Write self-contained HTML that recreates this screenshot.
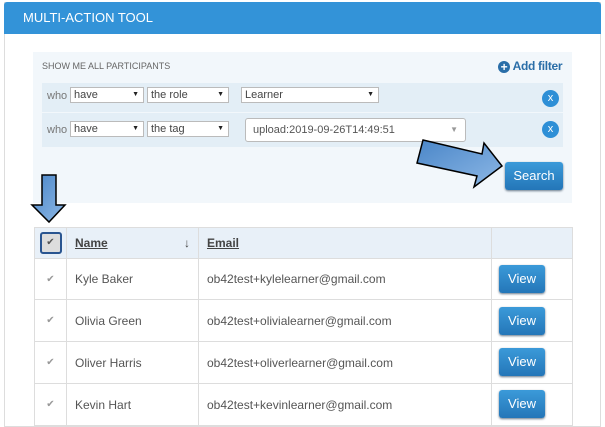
<!DOCTYPE html><html><head><style>
body{margin:0;width:605px;height:427px;background:#fff;font-family:"Liberation Sans",sans-serif;position:relative;overflow:hidden}
.a{position:absolute}
.sel{position:absolute;background:#fff;border:1px solid #bbb;font-size:11px;color:#444;box-sizing:border-box;padding:1px 3px;line-height:12px}
.sel:after{content:"▼";position:absolute;right:4px;top:1px;font-size:7px;color:#222}
.x{position:absolute;width:17px;height:17px;border-radius:50%;background:#2e8fd6;color:#fff;font-size:11px;text-align:center;line-height:16px}
.btn{position:absolute;background:linear-gradient(#3b9ad9,#2476b8);color:#fff;border-radius:3px;font-size:13px;text-align:center;box-shadow:0 1px 2px #678}
table{table-layout:fixed}
td{border:1px solid #ddd;font-size:12px;color:#555;padding:0;overflow:hidden;white-space:nowrap}
</style></head><body>
<div class="a" style="left:4px;top:2px;width:597px;height:425px;border:1px solid #ddd;box-sizing:border-box"></div>
<div class="a" style="left:4px;top:2px;width:597px;height:32px;background:#3393d8;border-radius:3px 3px 0 0;color:#fff;font-size:13px;line-height:32px;padding-left:19px;box-sizing:border-box">MULTI-ACTION TOOL</div>
<div class="a" style="left:33px;top:52px;width:539px;height:151px;background:#f2f7fb"></div>
<div class="a" style="left:42px;top:61px;font-size:9px;color:#666">SHOW ME ALL PARTICIPANTS</div>
<div class="a" style="left:498px;top:59px;font-size:12px;font-weight:bold;color:#2a6ea8;letter-spacing:-0.3px"><span style="display:inline-block;width:12px;height:12px;border-radius:50%;background:#2a6ea8;color:#fff;text-align:center;line-height:12px;font-size:12px;vertical-align:-1px">+</span> Add filter</div>
<div class="a" style="left:42px;top:83px;width:521px;height:29px;background:#e3eef6"></div>
<div class="a" style="left:42px;top:113px;width:521px;height:34px;background:#e3eef6"></div>
<div class="a" style="left:47px;top:90px;font-size:11px;color:#777">who</div>
<div class="a" style="left:47px;top:124px;font-size:11px;color:#777">who</div>
<div class="sel" style="left:70px;top:87px;width:74px;height:16px">have</div>
<div class="sel" style="left:147px;top:87px;width:82px;height:16px">the role</div>
<div class="sel" style="left:241px;top:87px;width:138px;height:16px">Learner</div>
<div class="sel" style="left:70px;top:121px;width:74px;height:16px">have</div>
<div class="sel" style="left:147px;top:121px;width:82px;height:16px">the tag</div>
<div class="a" style="left:245px;top:118px;width:221px;height:24px;background:#fff;border:1px solid #bbb;border-radius:3px;box-sizing:border-box;font-size:11px;color:#555;line-height:22px;padding-left:7px">upload:2019-09-26T14:49:51<span style="position:absolute;right:7px;color:#999;font-size:8px">▼</span></div>
<div class="x" style="left:542px;top:90px">x</div>
<div class="x" style="left:542px;top:121px">x</div>
<div class="btn" style="left:505px;top:162px;width:58px;height:28px;line-height:28px">Search</div>
<svg class="a" style="left:0;top:0" width="605" height="427"><defs><linearGradient id="g" x1="0" y1="0" x2="1" y2="1"><stop offset="0" stop-color="#4a86c8"/><stop offset="1" stop-color="#8db8e6"/></linearGradient></defs>
<polygon points="423,140 482,154 484,143 502,166 474,187 477,176 417,163" fill="url(#g)" stroke="#000" stroke-width="1.5"/>
<polygon points="42,175 56,175 56,205 65,205 49,222 32,205 42,205" fill="url(#g)" stroke="#000" stroke-width="1.5"/></svg>
<table class="a" style="left:34px;top:227px;width:538px;border-collapse:collapse">
<colgroup><col style="width:32px"><col style="width:132px"><col style="width:293px"><col style="width:81px"></colgroup>
<tr style="height:31px;background:#e8f0f8"><td style="text-align:center"><span style="display:inline-block;width:18px;height:18px;border:2px solid #2a5590;border-radius:3px;line-height:18px;font-size:10px;background:#ddd">✔</span></td><td style="padding-left:8px;font-weight:bold;text-decoration:underline;color:#444">Name<span style="float:right;margin-right:8px;text-decoration:none;font-weight:normal">↓</span></td><td style="padding-left:8px;font-weight:bold;text-decoration:underline;color:#444">Email</td><td></td></tr>
<tr style="height:41px"><td style="text-align:center;color:#999;font-size:10px">✔</td><td style="padding-left:8px">Kyle Baker</td><td style="padding-left:8px">ob42test+kylelearner@gmail.com</td><td></td></tr>
<tr style="height:42px"><td style="text-align:center;color:#999;font-size:10px">✔</td><td style="padding-left:8px">Olivia Green</td><td style="padding-left:8px">ob42test+olivialearner@gmail.com</td><td></td></tr>
<tr style="height:42px"><td style="text-align:center;color:#999;font-size:10px">✔</td><td style="padding-left:8px">Oliver Harris</td><td style="padding-left:8px">ob42test+oliverlearner@gmail.com</td><td></td></tr>
<tr style="height:42px"><td style="text-align:center;color:#999;font-size:10px">✔</td><td style="padding-left:8px">Kevin Hart</td><td style="padding-left:8px">ob42test+kevinlearner@gmail.com</td><td></td></tr>
</table>
<div class="btn" style="left:499px;top:265px;width:46px;height:28px;line-height:28px">View</div>
<div class="btn" style="left:499px;top:307px;width:46px;height:28px;line-height:28px">View</div>
<div class="btn" style="left:499px;top:348px;width:46px;height:28px;line-height:28px">View</div>
<div class="btn" style="left:499px;top:390px;width:46px;height:28px;line-height:28px">View</div>
</body></html>
